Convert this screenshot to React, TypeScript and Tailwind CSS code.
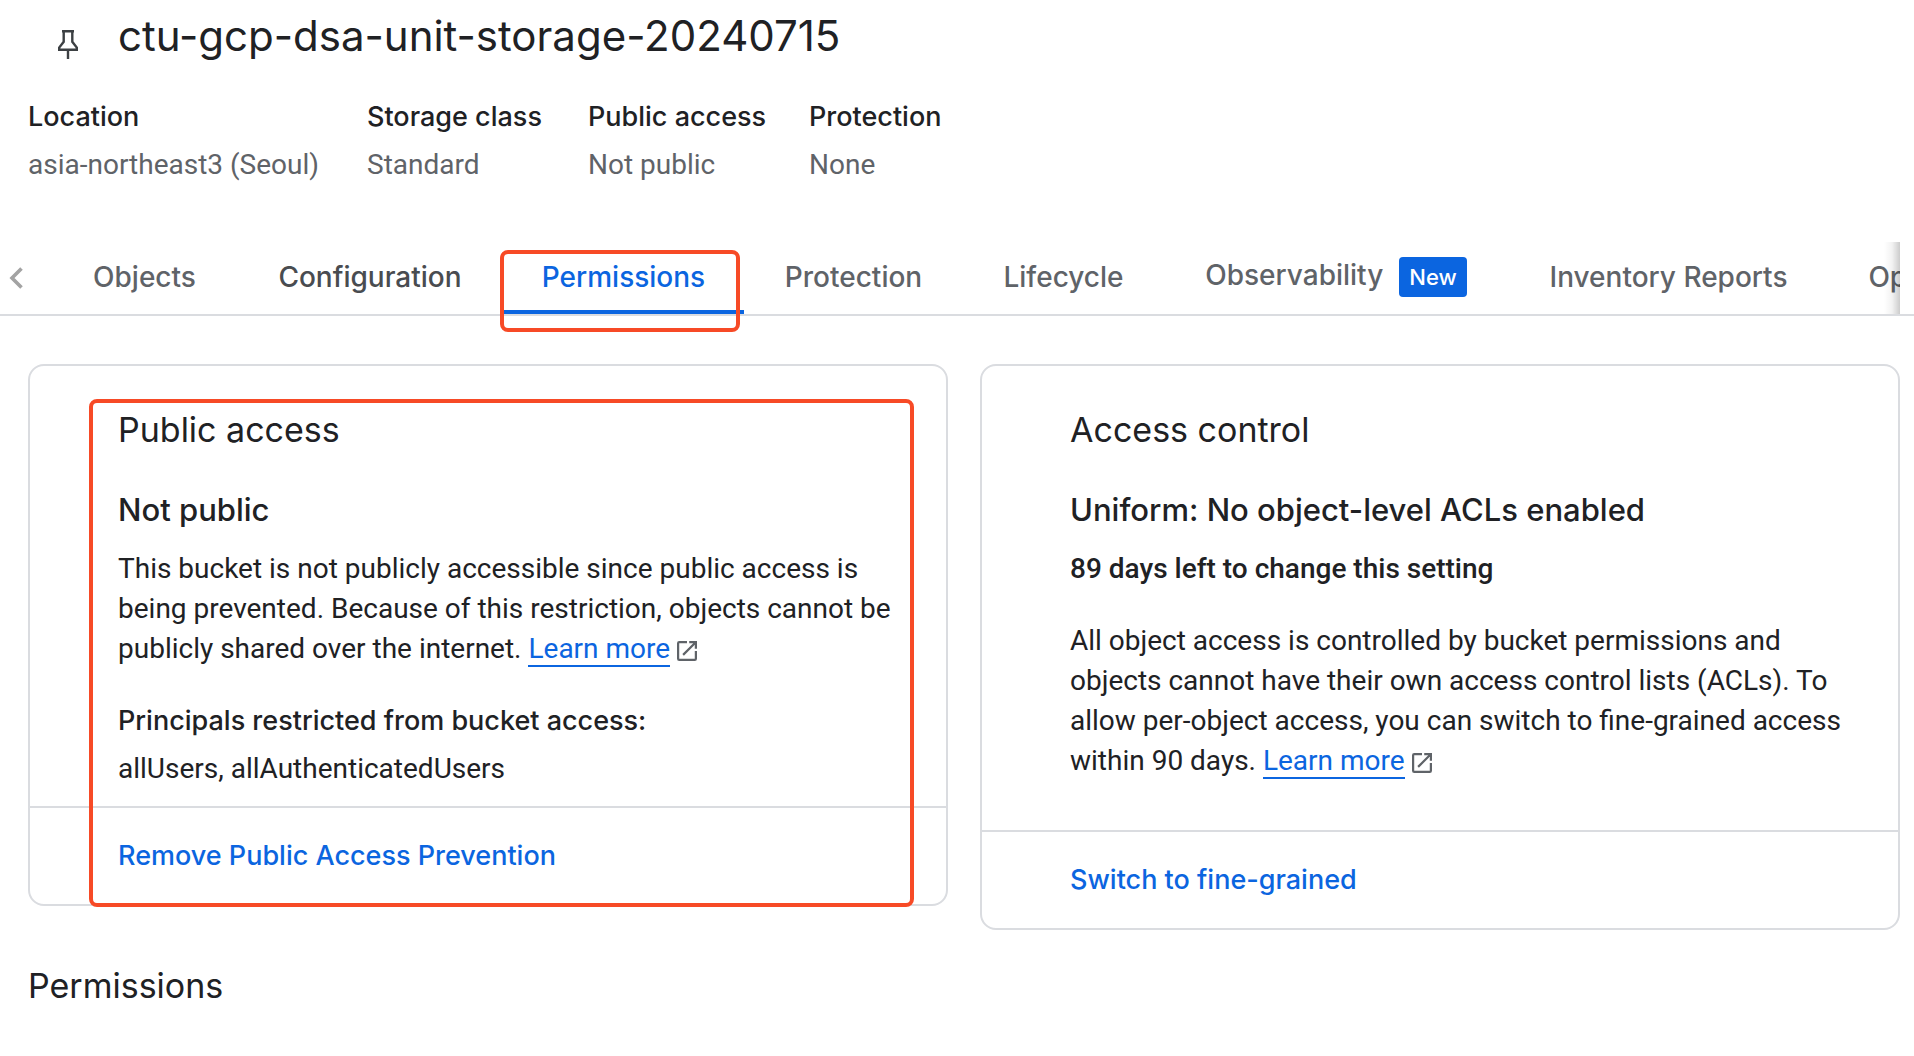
import type { ReactNode } from "react";

const bucketInfo = [
    { label: "Location", value: "asia-northeast3 (Seoul)", width: "w-[291px]" },
    { label: "Storage class", value: "Standard", width: "w-[173px]" },
    { label: "Public access", value: "Not public", width: "w-[173px]" },
    { label: "Protection", value: "None", width: "" },
];

const tabs = [
    { name: "Objects", width: "w-[185px]" },
    { name: "Configuration", width: "w-[266px]", hovered: true },
    { name: "Permissions", width: "w-[241px]", active: true },
    { name: "Protection", width: "w-[219px]" },
    { name: "Lifecycle", width: "w-[201px]" },
    { name: "Observability", width: "w-[344px]", isNew: true },
    { name: "Inventory Reports", width: "w-[321px]" },
    { name: "Operations", width: "w-[226px]" },
];

function PinIcon() {
    return (
        <svg className="h-[30px] w-[22px]" viewBox="0 0 22 30" fill="none" stroke="#3c4043" strokeWidth="2.4">
            <path d="M5 2.2h12M6.7 2.2v10.6L2.2 18.6v2.2h17.6v-2.2l-4.5-5.8V2.2M11 20.8V30" />
        </svg>
    );
}

function LearnMore() {
    return (
        <>
            <a href="#learn-more" className="text-[#0b65e0] border-b-2 border-[#0b65e0]">Learn more</a>
            <svg className="inline-block size-5 ml-[7px] align-[-3px]" viewBox="3 3 18 18" fill="#5f6368">
                <path d="M19 19H5V5h7V3H5a2 2 0 0 0-2 2v14a2 2 0 0 0 2 2h14a2 2 0 0 0 2-2v-7h-2v7zM14 3v2h3.6l-9.8 9.8 1.4 1.4L19 6.4V10h2V3h-7z" />
            </svg>
        </>
    );
}

// red marker drawn over a part of the page
function Marker({ className }: { className: string }) {
    return <div className={`absolute pointer-events-none border-4 border-[#f74a26] rounded-lg ${className}`} />;
}

type CardProps = {
    title: string;
    status: string;
    action: string;
    bodyClass: string;
    children: ReactNode;
};

function Card({ title, status, action, bodyClass, children }: CardProps) {
    return (
        <section className="border-2 border-[#dadce0] rounded-2xl">
            <div className={`pl-[88px] pr-8 pt-10 ${bodyClass}`}>
                <h2 className="font-['Inter',sans-serif] text-[34px] leading-[48px]">{title}</h2>
                <h3 className="font-['Inter',sans-serif] font-medium text-[31px] leading-[40px] mt-9 mb-[19px]">{status}</h3>
                {children}
            </div>
            <div className="h-[98px] pl-[88px] flex items-center border-t-2 border-[#dadce0]">
                <button type="button" className="font-['Inter',sans-serif] font-medium text-[27px] leading-[40px] text-[#0b65e0]">
                    {action}
                </button>
            </div>
        </section>
    );
}

export default function App() {
    return (
        <main className="min-h-screen overflow-x-hidden bg-white text-[#202124] font-['Roboto',sans-serif] text-[28px] leading-[40px]">
            <header className="flex items-center pl-[57px] pt-2">
                <button type="button" aria-label="Pin bucket" className="mt-4 mr-[39px]">
                    <PinIcon />
                </button>
                <h1 className="font-['Inter',sans-serif] text-[42px] leading-[56px]">ctu-gcp-dsa-unit-storage-20240715</h1>
            </header>

            <dl className="flex gap-12 pl-7 mt-[33px]">
                {bucketInfo.map((info) => (
                    <div key={info.label} className={`flex flex-col gap-2 whitespace-nowrap ${info.width}`}>
                        <dt className="font-['Inter',sans-serif] font-medium text-[27px]">{info.label}</dt>
                        <dd className="text-[#5f6368]">{info.value}</dd>
                    </div>
                ))}
            </dl>

            <nav className="flex mt-[57px] pr-[14px] border-b-2 border-[#dadce0]">
                <button type="button" aria-label="Previous tabs" className="w-[52px] shrink-0 pl-[9px]">
                    <svg className="h-[22px] w-[14px]" viewBox="0 0 14 22" fill="none" stroke="#a3a3a3" strokeWidth="3.6">
                        <path d="M12.5 1.5 3 11l9.5 9.5" />
                    </svg>
                </button>
                <div className="relative flex-1 min-w-0">
                    <div className="flex h-[72px] overflow-x-clip" role="tablist">
                        {tabs.map((tab) => (
                            <button
                                key={tab.name}
                                type="button"
                                role="tab"
                                aria-selected={!!tab.active}
                                className={`relative shrink-0 flex items-center justify-center gap-4 pb-0.5 font-['Inter',sans-serif] font-medium whitespace-nowrap ${tab.width} ${
                                    tab.active ? "text-[#0b65e0]" : tab.hovered ? "text-[#494c50]" : "text-[#5f6368]"
                                }`}
                            >
                                <span className={tab.isNew ? "pb-1" : ""}>{tab.name}</span>
                                {tab.isNew && (
                                    <span className="bg-[#0b65e0] text-white text-[22px] px-2.5 rounded">New</span>
                                )}
                                {tab.active && (
                                    <>
                                        <span className="absolute inset-x-0 bottom-0 h-1 bg-[#0b65e0]" />
                                        <Marker className="-left-[3px] right-1 top-2 -bottom-[18px]" />
                                    </>
                                )}
                            </button>
                        ))}
                    </div>
                    <div className="absolute right-0 inset-y-0 w-4 bg-linear-to-l from-black/20 via-black/5 to-transparent" />
                </div>
            </nav>

            <div className="grid grid-cols-2 items-start gap-8 pl-7 pr-[14px] mt-12">
                <div className="relative">
                    <Card title="Public access" status="Not public" action="Remove Public Access Prevention" bodyClass="pb-[17px]">
                        <p>
                            This bucket is not publicly accessible since public access is being prevented. Because of this
                            restriction, objects cannot be publicly shared over the internet. <LearnMore />
                        </p>
                        <p className="font-['Inter',sans-serif] font-medium text-[27px] mt-8 mb-2">Principals restricted from bucket access:</p>
                        <p>allUsers, allAuthenticatedUsers</p>
                    </Card>
                    <Marker className="left-[61px] right-[34px] top-[35px] -bottom-px" />
                </div>

                <Card title="Access control" status="Uniform: No object-level ACLs enabled" action="Switch to fine-grained" bodyClass="pb-[49px]">
                    <p className="font-medium">89 days left to change this setting</p>
                    <p className="mt-8">
                        All object access is controlled by bucket permissions and objects cannot have their own access control
                        lists (ACLs). To allow per-object access, you can switch to fine-grained access within 90
                        days. <LearnMore />
                    </p>
                </Card>
            </div>

            <h2 className="font-['Inter',sans-serif] text-[34px] leading-[48px] pl-7 mt-8">Permissions</h2>
        </main>
    );
}
